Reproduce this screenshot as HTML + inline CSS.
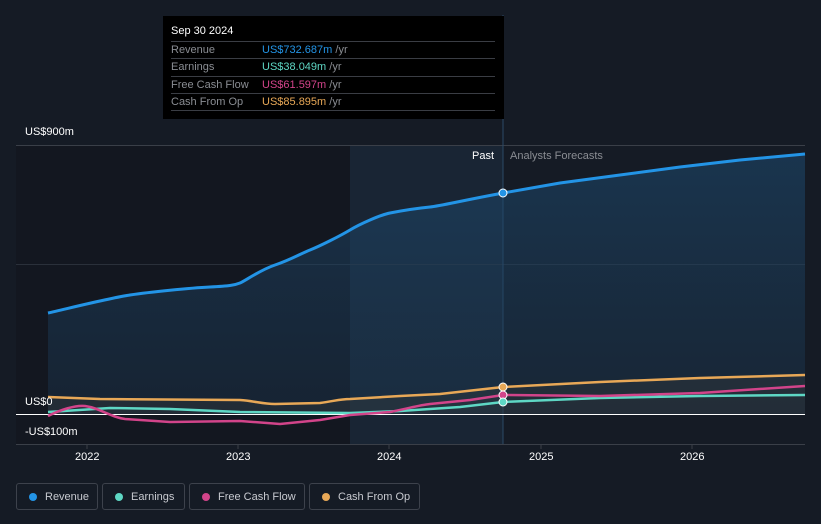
<!DOCTYPE html>
<html><head><meta charset="utf-8"><style>
body{margin:0;width:821px;height:524px;background:#151b25;font-family:"Liberation Sans",sans-serif;overflow:hidden;position:relative}
.tt{position:absolute;left:163px;top:16px;width:341px;height:103px;background:#000;}
.tt .h{position:absolute;left:8px;top:9px;color:#fff;font-size:11px}
.row{position:absolute;left:8px;width:324px;height:17px;border-top:1px solid #3a3d44;font-size:11px;color:#8a8d93;line-height:17px}
.row span{position:absolute;left:91px}
.row i{font-style:normal;color:#8a8d93}
.lab{position:absolute;font-size:11px;color:#fff}
.leg{position:absolute;top:483px;height:27px;border:1px solid #3d424c;border-radius:3px;font-size:11px;color:#c8cad0;line-height:27px;box-sizing:border-box}
.leg b{position:absolute;left:12px;top:9px;width:8px;height:8px;border-radius:50%}
.leg span{position:absolute;left:28px}
</style></head><body>
<svg width="821" height="524" style="position:absolute;left:0;top:0">
<defs>
<linearGradient id="g" x1="0" y1="0" x2="0" y2="1"><stop offset="0" stop-color="#1d4a70" stop-opacity=".55"/><stop offset="1" stop-color="#1d3a55" stop-opacity=".35"/></linearGradient>
</defs>
<rect x="16" y="145" width="334" height="299" fill="#12161e" opacity=".6"/>
<rect x="350" y="145" width="153" height="299" fill="#1b2a3a" opacity=".7"/>
<line x1="16" y1="145.5" x2="805" y2="145.5" stroke="#3a3f48"/>
<line x1="16" y1="264.5" x2="805" y2="264.5" stroke="#2a303a"/>
<line x1="503" y1="15" x2="503" y2="444" stroke="#2b4a66"/>
<path d="M48,313 C70,308 110,298 130,295 S190,288 210,287 S235,285 240,283 S260,270 275,265 S300,254 310,250 S340,236 350,230 S380,215 390,213 S420,208 430,207 S460,201 503,193 L560,183 L620,175 L680,167 L740,160 L805,154 L805,414 L48,414Z" fill="url(#g)"/>
<path d="M48,313 C70,308 110,298 130,295 S190,288 210,287 S235,285 240,283 S260,270 275,265 S300,254 310,250 S340,236 350,230 S380,215 390,213 S420,208 430,207 S460,201 503,193 L560,183 L620,175 L680,167 L740,160 L805,154" fill="none" stroke="#2394e6" stroke-width="3"/>
<path d="M48,397 L100,399 L240,400 C255,401 262,404 275,404 L320,403 C335,401 340,399 350,399 L400,396 L440,394 L503,387 L600,382 L700,378 L805,375 L805,414 L48,414Z" fill="#3a3c3c" opacity=".35"/>
<line x1="16" y1="414.5" x2="805" y2="414.5" stroke="#fff" stroke-width="1"/>
<line x1="16" y1="444.5" x2="805" y2="444.5" stroke="#3a3f48"/>
<path d="M48,397 L100,399 L240,400 C255,401 262,404 275,404 L320,403 C335,401 340,399 350,399 L400,396 L440,394 L503,387 L600,382 L700,378 L805,375" fill="none" stroke="#e8a857" stroke-width="2.5"/>
<path d="M48,412 L110,408 L170,409 L240,412 L350,413 L400,411 L460,407 L503,402 L600,398 L700,396 L805,395" fill="none" stroke="#5ed7c4" stroke-width="2.5"/>
<path d="M48,416 C60,410 75,405 85,406 C100,408 110,417 125,419 L170,422 L240,421 L280,424 L320,420 L350,415 L390,412 C410,408 420,405 430,404 L470,400 L503,395 L600,396 L700,393 L805,386" fill="none" stroke="#d2448a" stroke-width="2.5"/>
<circle cx="503" cy="193" r="4" fill="#2394e6" stroke="#fff" stroke-width="1"/>
<circle cx="503" cy="387" r="4" fill="#e8a857" stroke="#fff" stroke-width="1"/>
<circle cx="503" cy="395" r="4" fill="#d2448a" stroke="#fff" stroke-width="1"/>
<circle cx="503" cy="402" r="4" fill="#5ed7c4" stroke="#fff" stroke-width="1"/>
<g stroke="#3a3f48"><line x1="87" y1="444" x2="87" y2="449"/><line x1="238" y1="444" x2="238" y2="449"/><line x1="389" y1="444" x2="389" y2="449"/><line x1="541" y1="444" x2="541" y2="449"/><line x1="692" y1="444" x2="692" y2="449"/></g>
</svg>
<div class="tt"><div class="h">Sep 30 2024</div>
<div class="row" style="top:25px">Revenue<span style="color:#2394e6">US$732.687m <i>/yr</i></span></div>
<div class="row" style="top:42px">Earnings<span style="color:#5ed7c4">US$38.049m <i>/yr</i></span></div>
<div class="row" style="top:60px">Free Cash Flow<span style="color:#d2448a">US$61.597m <i>/yr</i></span></div>
<div class="row" style="top:77px">Cash From Op<span style="color:#e8a857">US$85.895m <i>/yr</i></span></div>
<div class="row" style="top:94px;height:0"></div>
</div>
<div class="lab" style="left:25px;top:126px">US$900m</div>
<div class="lab" style="left:25px;top:396px">US$0</div>
<div class="lab" style="left:25px;top:426px">-US$100m</div>
<div class="lab" style="left:472px;top:150px">Past</div>
<div class="lab" style="left:510px;top:150px;color:#8a8d93">Analysts Forecasts</div>
<div class="lab" style="left:75px;top:451px">2022</div>
<div class="lab" style="left:226px;top:451px">2023</div>
<div class="lab" style="left:377px;top:451px">2024</div>
<div class="lab" style="left:529px;top:451px">2025</div>
<div class="lab" style="left:680px;top:451px">2026</div>
<div class="leg" style="left:16px;width:82px"><b style="background:#2394e6"></b><span>Revenue</span></div>
<div class="leg" style="left:102px;width:83px"><b style="background:#5ed7c4"></b><span>Earnings</span></div>
<div class="leg" style="left:189px;width:116px"><b style="background:#d2448a"></b><span>Free Cash Flow</span></div>
<div class="leg" style="left:309px;width:111px"><b style="background:#e8a857"></b><span>Cash From Op</span></div>
</body></html>
